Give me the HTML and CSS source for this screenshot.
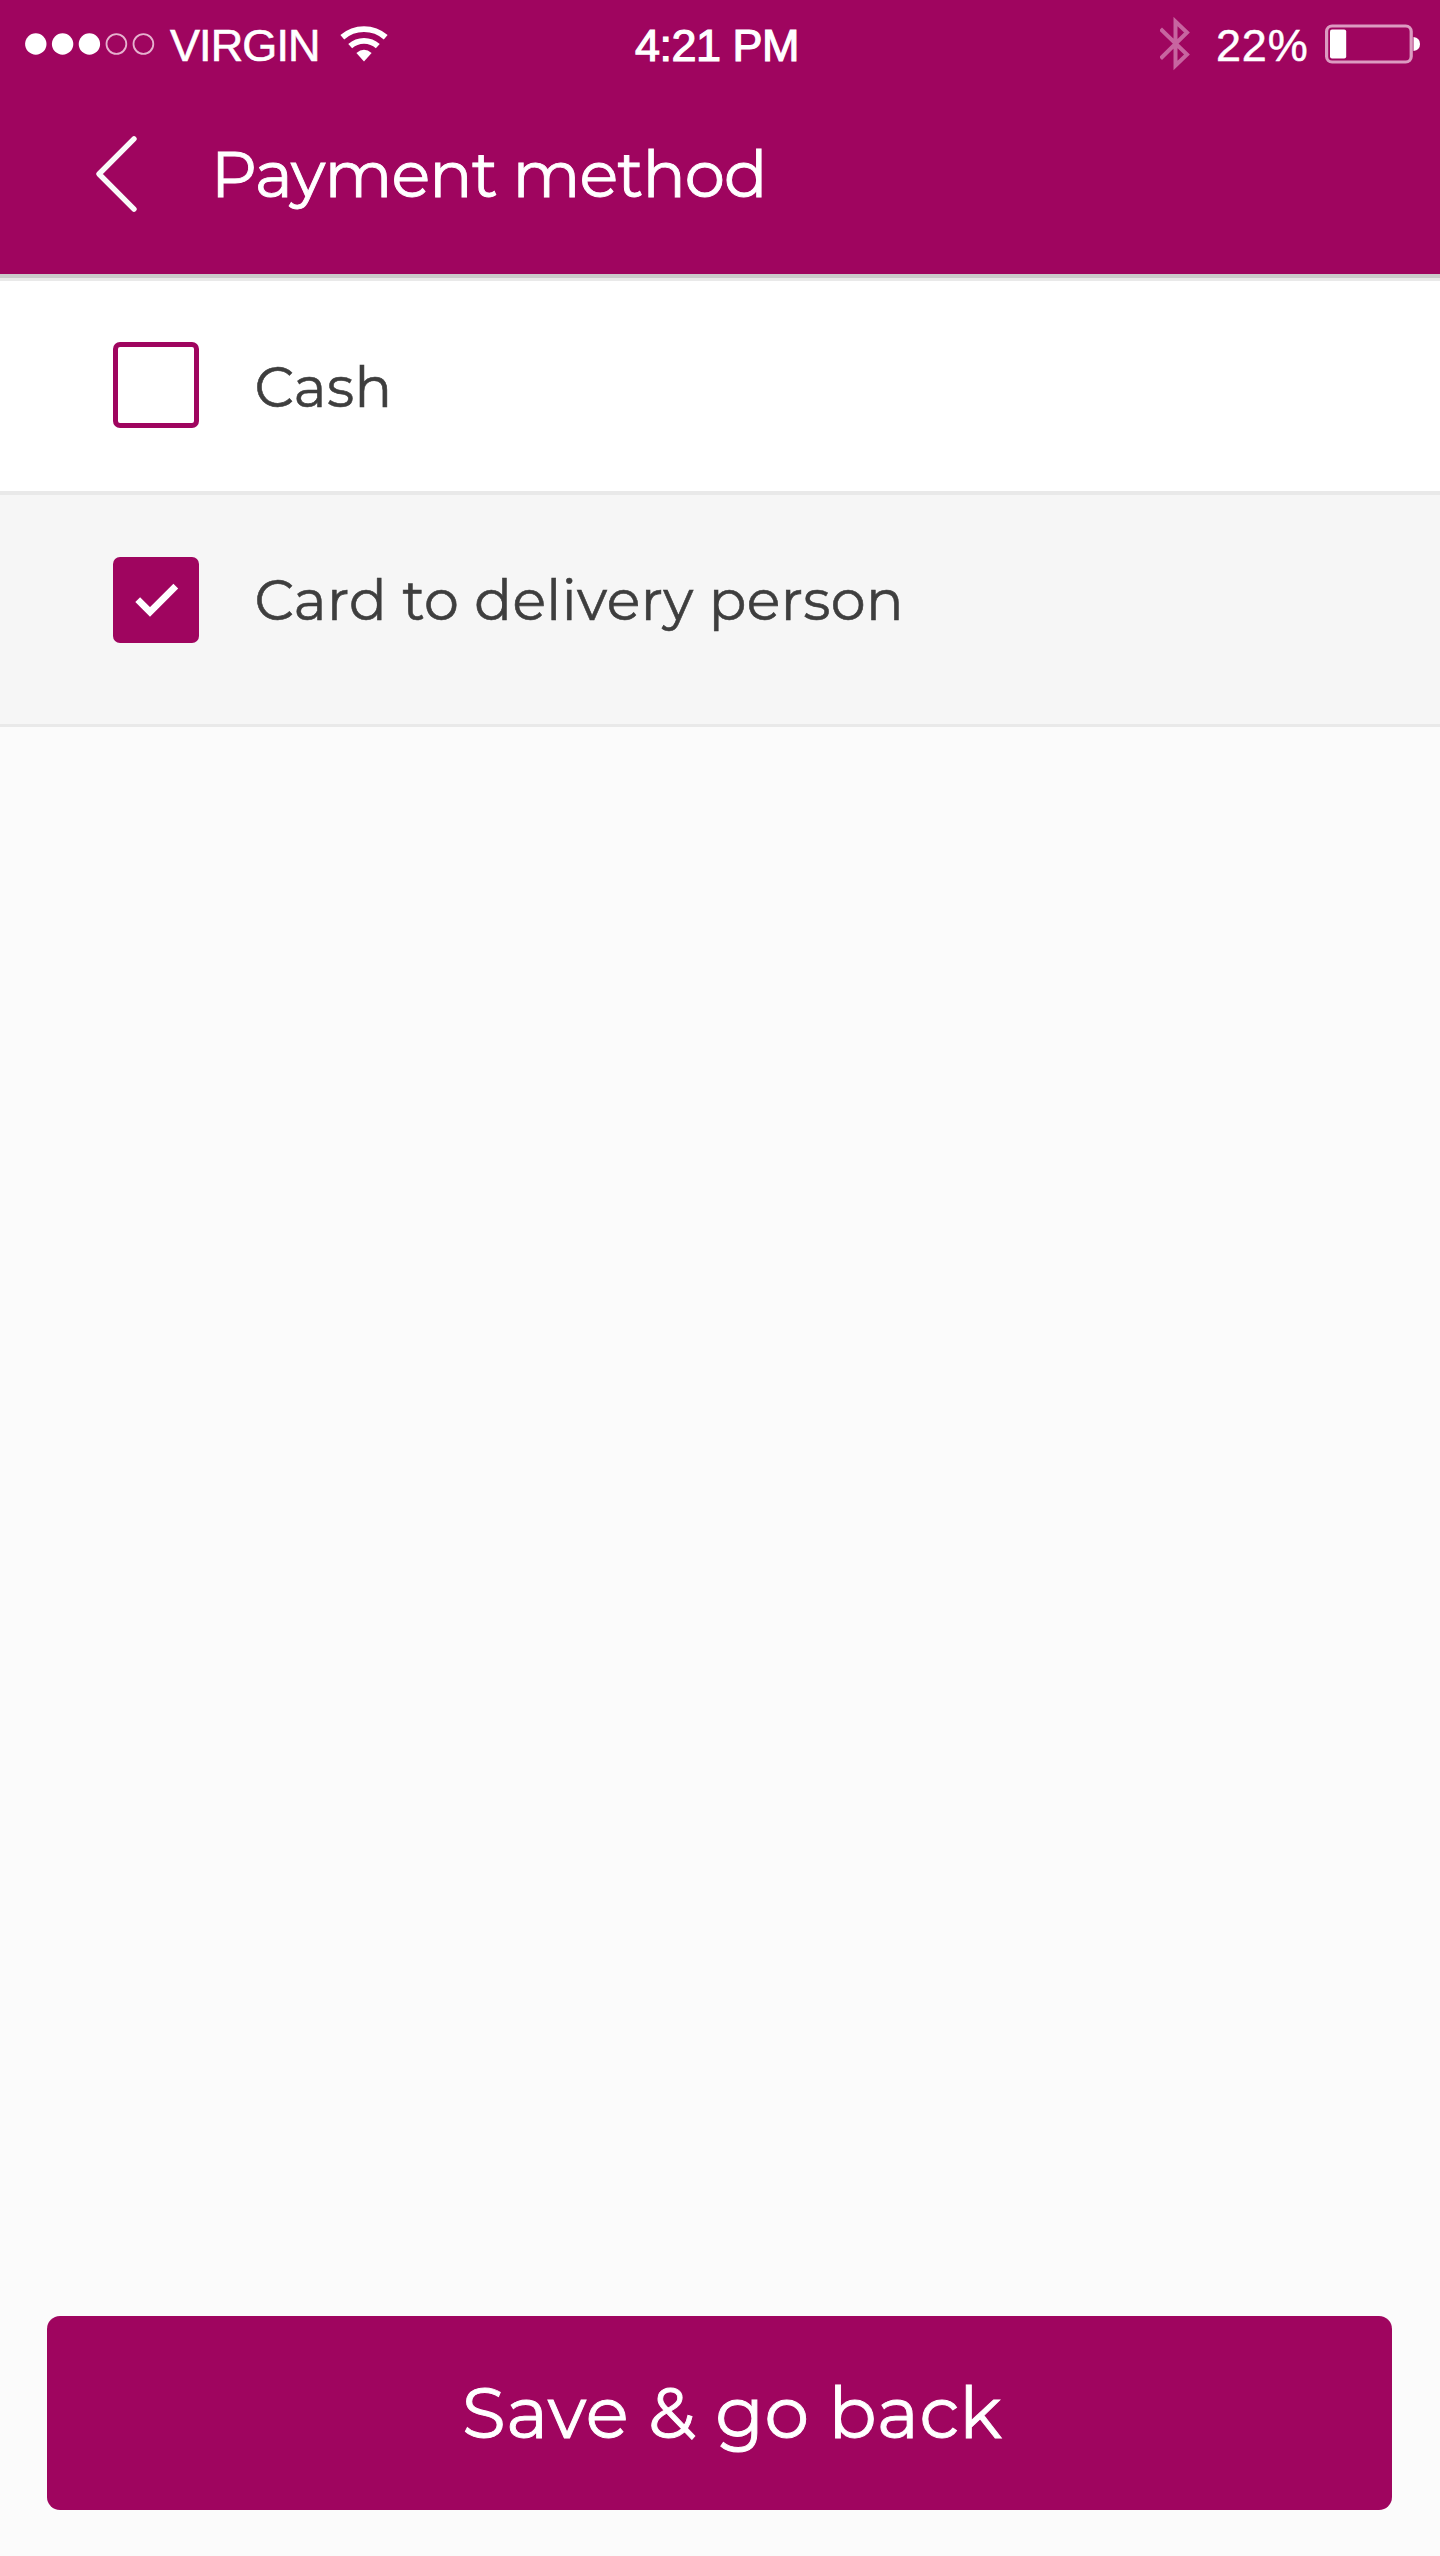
FILE: index.html
```html
<!DOCTYPE html>
<html lang="en">
<head>
<meta charset="utf-8">
<title>Payment method</title>
<link rel="stylesheet" href="styles.css">
</head>
<body>
<div class="screen">
  <header class="header">
    <div class="status">
      <div class="status-left">
        <svg class="signal" width="130" height="24" viewBox="0 0 130 24">
          <g fill="#fff"><circle cx="10.8" cy="12" r="10.7"/><circle cx="37.6" cy="12" r="10.7"/><circle cx="64.4" cy="12" r="10.7"/></g>
          <g fill="none" stroke="#e6b2cf" stroke-width="1.8"><circle cx="91.4" cy="12" r="9.9"/><circle cx="118.4" cy="12" r="9.9"/></g>
        </svg>
        <span class="carrier">VIRGIN</span>
        <svg class="wifi" width="48" height="38" viewBox="0 0 48 38">
          <g fill="none" stroke="#fff" stroke-width="5.8"><path d="M2.3 12.3A33 33 0 0 1 45.7 12.3"/><path d="M10.2 21.2A20.5 20.5 0 0 1 37.8 21.2"/></g>
          <path d="M16.4 28Q24 21.4 31.6 28L24 36.5Z" fill="#fff"/>
        </svg>
      </div>
      <span class="time">4:21 PM</span>
      <div class="status-right">
        <svg class="bluetooth" width="32" height="54" viewBox="0 0 32 54">
          <path d="M0.6 12L27 37.5L15.5 48.5V4.5L27 15.5L0.6 41.5" fill="none" stroke="#c765a0" stroke-width="4"/>
        </svg>
        <span class="percent">22%</span>
        <svg class="battery" width="96" height="40" viewBox="0 0 96 40">
          <rect x="1.6" y="2" width="84.6" height="36" rx="5.5" fill="none" stroke="#dc9bc1" stroke-width="3.2"/>
          <rect x="5" y="5.5" width="16.2" height="29" rx="2" fill="#fff"/>
          <path d="M88.5 13Q95 14 95 20Q95 26 88.5 27Z" fill="#fff"/>
        </svg>
      </div>
    </div>
    <div class="titlebar">
      <svg class="back" width="44" height="80" viewBox="0 0 44 80">
        <path d="M40 4.9L5 40L40 75.1" fill="none" stroke="#fafafa" stroke-width="5.4" stroke-linecap="round" stroke-linejoin="round"/>
      </svg>
      <h1 class="title">Payment method</h1>
    </div>
  </header>
  <main class="options">
    <div class="option option-cash">
      <span class="checkbox"></span>
      <span class="label label-cash">Cash</span>
    </div>
    <div class="option option-card">
      <span class="checkbox checked">
        <svg width="86" height="86" viewBox="0 0 86 86"><path d="M24.7 42.7L37 55L62.8 29.2" fill="none" stroke="#fff" stroke-width="6.8"/></svg>
      </span>
      <span class="label label-card">Card to delivery person</span>
    </div>
  </main>
  <footer class="footer">
    <button class="save" type="button"><span class="save-text">Save &amp; go back</span></button>
  </footer>
</div>
</body>
</html>
```
FILE: styles.css
```css
* { box-sizing: border-box; }
body { margin: 0; background: #fbfbfb; font-family: Montserrat, Inter, sans-serif; }
svg { display: block; flex: none; }
.screen { width: 1440px; height: 2556px; display: flex; flex-direction: column; }
.header { height: 274px; background: #9f055f; color: #fff; flex: none; }
.status { height: 88px; display: grid; grid-template-columns: 635px 1fr 280px; align-items: center; font: 45px/52px "Liberation Sans", sans-serif; white-space: nowrap; }
.status-left { display: flex; align-items: center; padding-left: 25px; }
.carrier { margin-left: 15px; width: 150px; padding-top: 3px; letter-spacing: -0.9px; -webkit-text-stroke: 0.6px #fff; }
.wifi { margin-left: 20px; }
.time { padding-top: 3px; letter-spacing: -0.5px; -webkit-text-stroke: 1.2px #fff; }
.status-right { display: flex; align-items: center; }
.percent { padding-top: 3px; margin-left: 24px; width: 92px; letter-spacing: 0.8px; -webkit-text-stroke: 0.5px #fff; }
.battery { margin-left: 17px; }
.titlebar { height: 172px; display: flex; align-items: center; padding-left: 94px; }
.title { margin: 0 0 0 73px; font-size: 64px; font-weight: 400; line-height: 80px; letter-spacing: -0.9px; -webkit-text-stroke: 0.9px #fff; white-space: nowrap; }
.options { flex: 1; }
.option { display: flex; align-items: flex-start; padding-left: 113px; }
.option-cash { height: 221px; padding-top: 64px; background: #fff; border-top: 4px solid #cbcbcb; border-bottom: 4px solid #e9e9e9; box-shadow: inset 0 3px #e9e9e9; }
.option-card { height: 232px; padding-top: 62px; background: #f6f6f6; border-bottom: 3px solid #e9e9e9; }
.checkbox { width: 86px; height: 86px; border: 5px solid #9f055f; border-radius: 7px; flex: none; }
.checked { border: 0; background: #9f055f; }
.label { margin-left: 55.5px; font-size: 55.5px; line-height: 86px; color: #3e3e3e; letter-spacing: 0.45px; -webkit-text-stroke: 0.6px #3e3e3e; white-space: nowrap; }
.label-cash { padding-top: 2px; }
.footer { padding: 0 48px 46px 47px; }
.save { display: flex; align-items: center; width: 100%; height: 194px; padding: 0 0 0 415px; border: 0; border-radius: 13px; background: #9f055f; color: #fff; font: 400 71px/90px Montserrat, Inter, sans-serif; letter-spacing: 0.5px; -webkit-text-stroke: 0.9px #fff; white-space: nowrap; }
```
